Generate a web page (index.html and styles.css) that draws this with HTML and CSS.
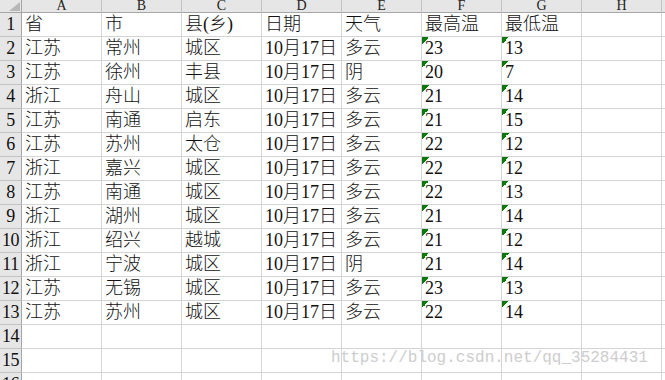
FILE: index.html
```html
<!DOCTYPE html>
<html lang="zh">
<head>
<meta charset="utf-8">
<link rel="stylesheet" href="styles.css">
</head>
<body>
<div class="sheet">
  <div class="corner"><svg class="tri" width="14" height="10" viewBox="0 0 14 10"><polygon points="13,0 13,9 2,9" fill="#b8b8b8"/></svg></div>
  <div class="ch">A</div><div class="ch">B</div><div class="ch">C</div><div class="ch">D</div><div class="ch">E</div><div class="ch">F</div><div class="ch">G</div><div class="ch">H</div><div class="ch last"></div>

  <div class="rh">1</div><div class="c">省</div><div class="c">市</div><div class="c">县(乡)</div><div class="c">日期</div><div class="c">天气</div><div class="c">最高温</div><div class="c">最低温</div><div class="c"></div><div class="c last"></div>
  <div class="rh">2</div><div class="c">江苏</div><div class="c">常州</div><div class="c">城区</div><div class="c">10月17日</div><div class="c">多云</div><div class="c n">23</div><div class="c n">13</div><div class="c"></div><div class="c last"></div>
  <div class="rh">3</div><div class="c">江苏</div><div class="c">徐州</div><div class="c">丰县</div><div class="c">10月17日</div><div class="c">阴</div><div class="c n">20</div><div class="c n">7</div><div class="c"></div><div class="c last"></div>
  <div class="rh">4</div><div class="c">浙江</div><div class="c">舟山</div><div class="c">城区</div><div class="c">10月17日</div><div class="c">多云</div><div class="c n">21</div><div class="c n">14</div><div class="c"></div><div class="c last"></div>
  <div class="rh">5</div><div class="c">江苏</div><div class="c">南通</div><div class="c">启东</div><div class="c">10月17日</div><div class="c">多云</div><div class="c n">21</div><div class="c n">15</div><div class="c"></div><div class="c last"></div>
  <div class="rh">6</div><div class="c">江苏</div><div class="c">苏州</div><div class="c">太仓</div><div class="c">10月17日</div><div class="c">多云</div><div class="c n">22</div><div class="c n">12</div><div class="c"></div><div class="c last"></div>
  <div class="rh">7</div><div class="c">浙江</div><div class="c">嘉兴</div><div class="c">城区</div><div class="c">10月17日</div><div class="c">多云</div><div class="c n">22</div><div class="c n">12</div><div class="c"></div><div class="c last"></div>
  <div class="rh">8</div><div class="c">江苏</div><div class="c">南通</div><div class="c">城区</div><div class="c">10月17日</div><div class="c">多云</div><div class="c n">22</div><div class="c n">13</div><div class="c"></div><div class="c last"></div>
  <div class="rh">9</div><div class="c">浙江</div><div class="c">湖州</div><div class="c">城区</div><div class="c">10月17日</div><div class="c">多云</div><div class="c n">21</div><div class="c n">14</div><div class="c"></div><div class="c last"></div>
  <div class="rh">10</div><div class="c">浙江</div><div class="c">绍兴</div><div class="c">越城</div><div class="c">10月17日</div><div class="c">多云</div><div class="c n">21</div><div class="c n">12</div><div class="c"></div><div class="c last"></div>
  <div class="rh">11</div><div class="c">浙江</div><div class="c">宁波</div><div class="c">城区</div><div class="c">10月17日</div><div class="c">阴</div><div class="c n">21</div><div class="c n">14</div><div class="c"></div><div class="c last"></div>
  <div class="rh">12</div><div class="c">江苏</div><div class="c">无锡</div><div class="c">城区</div><div class="c">10月17日</div><div class="c">多云</div><div class="c n">23</div><div class="c n">13</div><div class="c"></div><div class="c last"></div>
  <div class="rh">13</div><div class="c">江苏</div><div class="c">苏州</div><div class="c">城区</div><div class="c">10月17日</div><div class="c">多云</div><div class="c n">22</div><div class="c n">14</div><div class="c"></div><div class="c last"></div>
  <div class="rh">14</div><div class="c"></div><div class="c"></div><div class="c"></div><div class="c"></div><div class="c"></div><div class="c"></div><div class="c"></div><div class="c"></div><div class="c last"></div>
  <div class="rh">15</div><div class="c"></div><div class="c"></div><div class="c"></div><div class="c"></div><div class="c"></div><div class="c"></div><div class="c"></div><div class="c"></div><div class="c last"></div>
  <div class="rh">16</div><div class="c"></div><div class="c"></div><div class="c"></div><div class="c"></div><div class="c"></div><div class="c"></div><div class="c"></div><div class="c"></div><div class="c last"></div>
</div>
<div class="watermark">https://blog.csdn.net/qq_35284431</div>
</body>
</html>
```
FILE: styles.css
```css
html, body {
  margin: 0;
  padding: 0;
  background: #ffffff;
  width: 665px;
  height: 380px;
  overflow: hidden;
}
.sheet {
  display: grid;
  grid-template-columns: 22px repeat(8, 80px) 1fr;
  grid-template-rows: 13px repeat(16, 24px);
  width: 665px;
  font-family: "Liberation Serif", "Noto Sans CJK SC", serif;
  color: #111;
}
.sheet > div {
  box-sizing: border-box;
  overflow: hidden;
  white-space: nowrap;
}
.corner {
  background: #e6e6e6;
  border-right: 1px solid #a6a6a6;
  border-bottom: 1px solid #a6a6a6;
  display: flex;
  align-items: flex-end;
  justify-content: flex-end;
}
.tri { display: block; }
.ch {
  background: #e6e6e6;
  border-right: 1px solid #c4c4c4;
  border-bottom: 1px solid #a6a6a6;
  font-size: 14px;
  line-height: 11px;
  text-align: center;
  color: #222;
}
.ch.last { border-right: none; }
.rh {
  background: #e6e6e6;
  border-right: 1px solid #a6a6a6;
  border-bottom: 1px solid #c4c4c4;
  font-size: 18px;
  line-height: 23px;
  text-align: center;
  color: #111;
  letter-spacing: -0.5px;
}
.c {
  border-right: 1px solid #d4d4d4;
  border-bottom: 1px solid #d4d4d4;
  font-size: 18px;
  font-weight: 300;
  line-height: 22px;
  padding-left: 3px;
}
.c.last { border-right: none; }
.c.n {
  background-image: linear-gradient(135deg, #0b7a0b 50%, transparent 50%);
  background-size: 7px 7px;
  background-repeat: no-repeat;
  background-position: 0 0;
}
.watermark {
  position: absolute;
  left: 331px;
  top: 348px;
  font-family: "Liberation Mono", monospace;
  font-size: 16px;
  line-height: 20px;
  color: #cdcdcd;
  white-space: nowrap;
}
```
